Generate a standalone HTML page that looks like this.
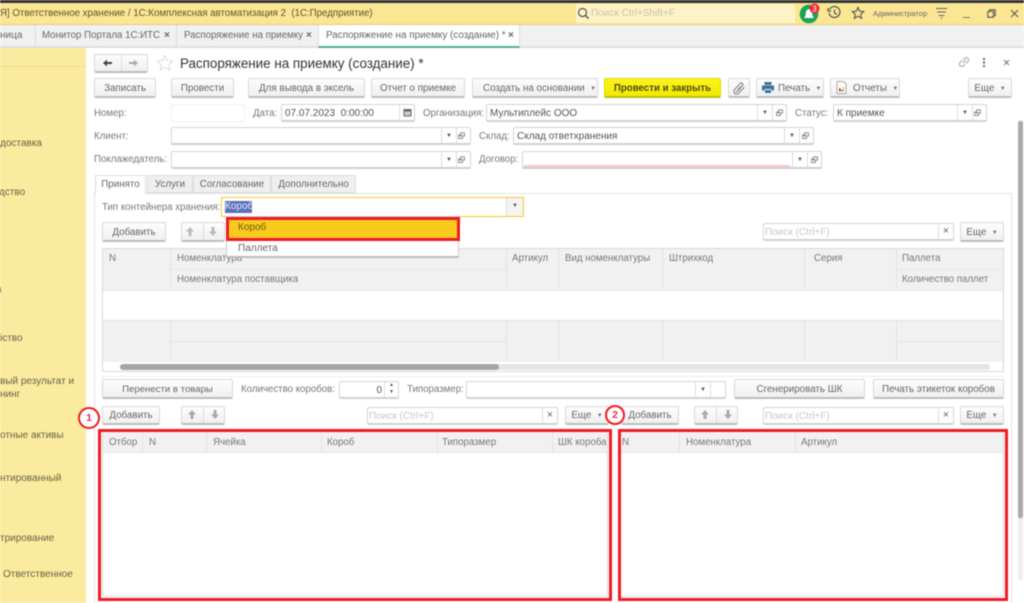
<!DOCTYPE html>
<html lang="ru"><head><meta charset="utf-8"><title>Распоряжение на приемку</title>
<style>
html,body{margin:0;padding:0;background:#fff}
#r{position:relative;width:1024px;height:603px;overflow:hidden;background:#fff;font:10px "Liberation Sans",sans-serif;color:#555;filter:blur(.5px)}
#r div,#r svg{position:absolute;box-sizing:border-box}
.t{white-space:nowrap;line-height:16px}
.b{background:linear-gradient(#fdfdfd,#f0f0f0);border:1px solid #d8d8d8;border-bottom:2px solid #bdbdbd;border-radius:2px;text-align:center;color:#666;white-space:nowrap;line-height:19px;font-size:9.8px}
.i{background:#fff;border:1px solid #d4d4d4;border-bottom:2px solid #d0d0d0;border-radius:2px;color:#555;line-height:17px;padding-left:3px;white-space:nowrap}
.s{border-left:1px solid #ddd;top:0;bottom:0;text-align:center;color:#555}
.l{color:#777;font-size:9.7px}
.h{background:#f1f1f1}
.c{top:0;bottom:0;border-left:1px solid #e2e2e2}
.rd{border:3px solid #ee1c25}
.ph{color:#c8c8c8}
.side{color:#6a6345}
.a{font-size:6px;vertical-align:1px;color:#777}
</style></head><body><div id="r">
<!-- top bars -->
<div style="left:0;top:0;width:1024px;height:3px;background:#333"></div>
<div style="left:0;top:3px;width:1024px;height:22px;background:#fbe694;border-bottom:1px solid #e5cf78"></div>
<div class="t" style="left:0;top:6px;font-size:9.7px;color:#5c5530">Я] Ответственное хранение / 1С:Комплексная автоматизация 2 &nbsp;(1С:Предприятие)</div>
<div style="left:576px;top:4px;width:219px;height:19px;background:#fdf3c6"></div>
<svg style="left:577px;top:7px" width="13" height="13" viewBox="0 0 13 13"><circle cx="5.5" cy="5.5" r="4" fill="none" stroke="#555" stroke-width="1.2"/><path d="M8.5 8.5L11.5 11.5" stroke="#555" stroke-width="1.4"/></svg>
<div class="t" style="left:591px;top:6px;color:#c9c4a8;font-size:10px">Поиск Ctrl+Shift+F</div>
<svg style="left:799px;top:2px" width="26" height="22" viewBox="0 0 26 22"><circle cx="10" cy="12" r="9.3" fill="#18a45a"/><path d="M5 16c2-2 1.500-4 2-6 .5-2 1.500-3 3-3s2.500 1 3 3c.5 2 0 4 2 6z" fill="#fff"/><circle cx="15.500" cy="6.500" r="5" fill="#ee2b33"/><text x="15.500" y="9.500" font-size="8" fill="#fff" text-anchor="middle" font-family="Liberation Sans">3</text></svg>
<svg style="left:827px;top:5px" width="15" height="15" viewBox="0 0 15 15"><path d="M2.500 4.500A5.500 5.500 0 1 1 2 8" fill="none" stroke="#555" stroke-width="1.200"/><path d="M1 3v3h3M7.500 4.500v3.500l2.500 1.500" fill="none" stroke="#555" stroke-width="1.200"/></svg>
<svg style="left:851px;top:6px" width="14" height="14" viewBox="0 0 14 14"><path d="M7 1.500l1.700 3.700 4 .4-3 2.700.9 4L7 10.300l-3.600 2 .9-4-3-2.700 4-.4z" fill="none" stroke="#555" stroke-width="1.100"/></svg>
<div class="t" style="left:873px;top:6px;font-size:7.5px;color:#666">Администратор</div>
<svg style="left:935px;top:7px" width="14" height="13" viewBox="0 0 14 13"><path d="M1 1.500h11M2 5h9M3.500 8.500h6" stroke="#666" stroke-width="1"/><path d="M5.500 10.500h2l-1 1.500z" fill="#555"/></svg>
<div style="left:963px;top:17px;width:7px;height:1px;background:#777"></div>
<svg style="left:987px;top:9px" width="9" height="9" viewBox="0 0 9 9"><path d="M2.500 2.500V.8h5.700v5.700H6.500M.8 2.500h5.700v5.700H.8z" fill="none" stroke="#555" stroke-width="1.100"/></svg>
<svg style="left:1010px;top:9px" width="9" height="9" viewBox="0 0 9 9"><path d="M1 1l7 7M8 1L1 8" stroke="#555" stroke-width="1"/></svg>
<!-- tab row -->
<div style="left:0;top:25px;width:1024px;height:23px;background:#f1f1f1;border-bottom:2px solid #dedede"></div>
<div class="t" style="left:0;top:28px;color:#666">ница</div>
<div style="left:35px;top:25px;width:1px;height:22px;background:#ddd"></div>
<div class="t" style="left:42px;top:28px;color:#666;font-size:9.7px">Монитор Портала 1С:ИТС</div>
<div class="t" style="left:164px;top:28px;color:#666;font-weight:bold">×</div>
<div style="left:176px;top:25px;width:1px;height:22px;background:#ddd"></div>
<div class="t" style="left:184px;top:28px;color:#666;font-size:9.7px">Распоряжение на приемку</div>
<div class="t" style="left:306px;top:28px;color:#666;font-weight:bold">×</div>
<div style="left:318px;top:25px;width:202px;height:23px;background:#fff;border-left:1px solid #ddd;border-right:1px solid #ddd;border-bottom:2px solid #4cb585"></div>
<div class="t" style="left:326px;top:28px;color:#666;font-size:9.9px">Распоряжение на приемку (создание) *</div>
<div class="t" style="left:508px;top:28px;color:#666;font-weight:bold">×</div>
<!-- sidebar -->
<div style="left:0;top:48px;width:86px;height:555px;background:#fbeb9e"></div>
<div style="left:0;top:66px;width:86px;height:1px;background:#efdc8d"></div>
<div class="t side" style="left:0;top:136px">доставка</div>
<div class="t side" style="left:-1px;top:185px">дство</div>
<div class="t side" style="left:-4px;top:282px">а</div>
<div class="t side" style="left:0;top:331px">іство</div>
<div class="t side" style="left:0;top:374px">вый результат и</div>
<div class="t side" style="left:0;top:387px">нинг</div>
<div class="t side" style="left:0;top:428px">отные активы</div>
<div class="t side" style="left:0;top:471px">нтированный</div>
<div class="t side" style="left:0;top:531px">трирование</div>
<div class="t side" style="left:3px;top:567px">Ответственное</div>
<!-- title -->
<div class="b" style="left:94px;top:54px;width:54px;height:19px"></div>
<div style="left:121px;top:55px;width:1px;height:16px;background:#ddd"></div>
<svg style="left:102px;top:58px" width="40" height="10" viewBox="0 0 40 10"><path d="M1 5l4-3.500V4h5v2H5v2.500z" fill="#444"/><path d="M36 5l-4-3.500V4h-5v2h5v2.500z" fill="#aaa"/></svg>
<svg style="left:156px;top:54px" width="18" height="18" viewBox="0 0 18 18"><path d="M9 1.500l2.300 5 5.400.6-4 3.700 1.100 5.400L9 13.500l-4.800 2.700 1.100-5.400-4-3.700 5.400-.6z" fill="none" stroke="#ddd" stroke-width="1"/></svg>
<div class="t" style="left:180px;top:56px;font-size:13.4px;line-height:16px;color:#333">Распоряжение на приемку (создание) *</div>
<svg style="left:957px;top:55px" width="14" height="14" viewBox="0 0 14 14"><path d="M6 8l3-3M5 5.500L3 7.500a2.300 2.300 0 0 0 3.300 3.300l1.500-1.500M9 8.500l2-2A2.300 2.300 0 0 0 7.700 3.200L6.200 4.700" fill="none" stroke="#aaa" stroke-width="1.100"/></svg>
<div style="left:983px;top:58px;width:2px;height:2px;background:#666;box-shadow:0 3.500px 0 #666,0 7px 0 #666"></div>
<svg style="left:1003px;top:59px" width="7" height="7" viewBox="0 0 7 7"><path d="M1 1l5 5M6 1L1 6" stroke="#777" stroke-width="1"/></svg>
<!-- command bar -->
<div class="b" style="left:94px;top:78px;width:62px;height:20px">Записать</div>
<div class="b" style="left:171px;top:78px;width:63px;height:20px">Провести</div>
<div class="b" style="left:248px;top:78px;width:117px;height:20px">Для вывода в эксель</div>
<div class="b" style="left:371px;top:78px;width:94px;height:20px">Отчет о приемке</div>
<div class="b" style="left:472px;top:78px;width:126px;height:20px;text-align:left;padding-left:10px">Создать на основании &nbsp;<span class="a">▼</span></div>
<div class="b" style="left:604px;top:78px;width:117px;height:20px;background:linear-gradient(#fcf41c,#f2ea00);border-color:#e0d800;border-bottom-color:#c2bb10;color:#4f4b10;font-weight:bold;font-size:9.7px">Провести и закрыть</div>
<div class="b" style="left:728px;top:78px;width:22px;height:20px"></div>
<svg style="left:732px;top:81px" width="14" height="14" viewBox="0 0 14 14"><path d="M4 11.500l6.500-7a1.600 1.600 0 0 0-2.300-2.200L2.500 8.700a2.700 2.700 0 0 0 3.800 3.800l6-6.300M6 8.500l3-3" fill="none" stroke="#777" stroke-width="1"/></svg>
<div class="b" style="left:756px;top:78px;width:68px;height:20px;text-align:left;padding-left:21px">Печать &nbsp;<span class="a">▼</span></div>
<svg style="left:761px;top:81px" width="14" height="13" viewBox="0 0 14 13"><path d="M3.500 1h7v3h-7zM1 4.500h12v5h-2.500V8h-7v1.500H1zM4 9h6v3H4z" fill="#3f6f99"/></svg>
<div class="b" style="left:830px;top:78px;width:70px;height:20px;text-align:left;padding-left:22px">Отчеты &nbsp;<span class="a">▼</span></div>
<svg style="left:836px;top:81px" width="11" height="13" viewBox="0 0 11 13"><path d="M1 .500h6.500L10 3v9.500H1z" fill="#fff" stroke="#aaa"/><path d="M3 7h1.500v3.500H3z" fill="#d33"/><path d="M5 8.500h1.500v2H5z" fill="#2a9a4a"/><path d="M7 6h1v4.500H7z" fill="#d9a520"/></svg>
<div class="b" style="left:968px;top:78px;width:44px;height:20px">Еще &nbsp;<span class="a">▼</span></div>
<!-- form rows -->
<div class="t l" style="left:94px;top:106px">Номер:</div>
<div class="i" style="left:171px;top:104px;width:74px;height:18px;border:1px solid #efefef"></div>
<div class="t l" style="left:253px;top:106px">Дата:</div>
<div class="i" style="left:281px;top:104px;width:134px;height:18px">07.07.2023 &nbsp;0:00:00<div class="s" style="left:117px;width:15px"></div></div>
<svg style="left:403px;top:108px" width="9" height="9" viewBox="0 0 9 9"><path d="M.5 1h8v7.500h-8z" fill="#666"/><path d="M1.500 3.500h6v4h-6z" fill="#ccc"/></svg>
<div class="t l" style="left:423px;top:106px">Организация:</div>
<div class="i" style="left:486px;top:104px;width:301px;height:18px">Мультиплейс ООО<div class="s" style="left:270px;width:15px;font-size:6px;line-height:16px">▼</div><div class="s" style="left:285px;width:14px"></div></div>
<div class="t l" style="left:795px;top:106px">Статус:</div>
<div class="i" style="left:833px;top:104px;width:154px;height:18px">К приемке<div class="s" style="left:123px;width:15px;font-size:6px;line-height:16px">▼</div><div class="s" style="left:138px;width:14px"></div></div>
<div class="t l" style="left:94px;top:129px">Клиент:</div>
<div class="i" style="left:171px;top:127px;width:300px;height:18px"><div class="s" style="left:269px;width:15px;font-size:6px;line-height:16px">▼</div><div class="s" style="left:284px;width:14px"></div></div>
<div class="t l" style="left:479px;top:129px">Склад:</div>
<div class="i" style="left:513px;top:127px;width:301px;height:18px">Склад ответхранения<div class="s" style="left:270px;width:15px;font-size:6px;line-height:16px">▼</div><div class="s" style="left:285px;width:14px"></div></div>
<div class="t l" style="left:94px;top:152px">Поклажедатель:</div>
<div class="i" style="left:171px;top:151px;width:300px;height:18px"><div class="s" style="left:269px;width:15px;font-size:6px;line-height:16px">▼</div><div class="s" style="left:284px;width:14px"></div></div>
<div class="t l" style="left:479px;top:152px">Договор:</div>
<div class="i" style="left:522px;top:151px;width:300px;height:18px"><div style="left:1px;top:13px;width:266px;height:2px;background:#f9c9c9"></div><div class="s" style="left:269px;width:15px;font-size:6px;line-height:16px">▼</div><div class="s" style="left:284px;width:14px"></div></div>
<svg style="left:0;top:0;width:1024px;height:603px" viewBox="0 0 1024 603"><g fill="none" stroke="#888" stroke-width=".9" transform="translate(2.5 2.5)"><path d="M775 110.500h5v-3h-4v2M777 109.500h-3v3.500h4v-2.500"/><path d="M973 110.500h5v-3h-4v2M975 109.500h-3v3.500h4v-2.500"/><path d="M457 133.500h5v-3h-4v2M459 132.500h-3v3.500h4v-2.500"/><path d="M801 133.500h5v-3h-4v2M803 132.500h-3v3.500h4v-2.500"/><path d="M457 157.500h5v-3h-4v2M459 156.500h-3v3.500h4v-2.500"/><path d="M810 157.500h5v-3h-4v2M812 156.500h-3v3.500h4v-2.500"/><path d="M713 386.500h5v-3h-4v2M715 385.500h-3v3.500h4v-2.500"/></g></svg>
<!-- form tabs -->
<div style="left:94px;top:193px;width:918px;height:410px;border:1px solid #e2e2e2;border-bottom:0"></div>
<div class="t" style="left:95px;top:175px;width:51px;height:19px;background:#fff;border:1px solid #ddd;border-bottom:0;text-align:center;line-height:17px;color:#666;font-size:9.8px">Принято</div>
<div class="t" style="left:147px;top:175px;width:46px;height:18px;background:#efefef;border:1px solid #ddd;text-align:center;line-height:17px;color:#666;font-size:9.8px">Услуги</div>
<div class="t" style="left:193px;top:175px;width:78px;height:18px;background:#efefef;border:1px solid #ddd;text-align:center;line-height:17px;color:#666;font-size:9.8px">Согласование</div>
<div class="t" style="left:271px;top:175px;width:85px;height:18px;background:#efefef;border:1px solid #ddd;text-align:center;line-height:17px;color:#666;font-size:9.8px">Дополнительно</div>
<!-- upper toolbar -->
<div class="t l" style="left:102px;top:200px">Тип контейнера хранения:</div>
<div style="left:221px;top:197px;width:303px;height:20px;border:1px solid #f9c82a"></div>
<div style="left:224.500px;top:201px;width:27px;height:12px;background:#5b6fbd"></div>
<div class="t" style="left:225px;top:199px;color:#e7e9f7">Короб</div>
<div class="s" style="left:506px;top:198px;bottom:auto;height:18px;width:17px;font-size:6px;line-height:17px;background:#f4f4f4">▼</div>
<div class="b" style="left:102px;top:222px;width:64px;height:20px">Добавить</div>
<div class="b" style="left:181px;top:222px;width:44px;height:20px"></div>
<div style="left:203px;top:223px;width:1px;height:17px;background:#ddd"></div>
<div class="i ph" style="left:763px;top:223px;width:191px;height:18px;padding-left:1px">Поиск (Ctrl+F)<div class="s" style="left:174px;width:15px;line-height:15px;color:#666;font-size:11px">×</div></div>
<div class="b" style="left:960px;top:222px;width:44px;height:20px">Еще &nbsp;<span class="a">▼</span></div>
<!-- upper table -->
<div style="left:102px;top:248px;width:902px;height:124px;border:1px solid #d8d8d8;background:#fff">
 <div class="h" style="left:0;top:0;right:0;height:41px"></div>
 <div class="h" style="left:0;top:71px;right:0;height:42px;border-top:1px solid #e2e2e2"></div>
 <div class="c" style="left:67px;height:113px;bottom:auto"></div>
 <div class="c" style="left:403px;height:113px;bottom:auto"></div>
 <div class="c" style="left:455px;height:113px;bottom:auto"></div>
 <div class="c" style="left:559px;height:113px;bottom:auto"></div>
 <div class="c" style="left:701px;height:113px;bottom:auto"></div>
 <div class="c" style="left:793px;height:113px;bottom:auto"></div>
 <div style="left:0;top:41px;right:0;height:30px;background:#fff;border-top:1px solid #e6e6e6"></div>
 <div style="left:67px;top:20px;width:336px;height:1px;background:#e6e6e6"></div>
 <div style="left:793px;top:20px;width:107px;height:1px;background:#e6e6e6"></div>
 <div style="left:67px;top:92px;width:336px;height:1px;background:#e2e2e2"></div>
 <div style="left:793px;top:92px;width:107px;height:1px;background:#e2e2e2"></div>
 <div class="t l" style="left:6px;top:2px">N</div>
 <div class="t l" style="left:74px;top:2px">Номенклатура</div>
 <div class="t l" style="left:74px;top:23px">Номенклатура поставщика</div>
 <div class="t l" style="left:409px;top:2px">Артикул</div>
 <div class="t l" style="left:462px;top:2px">Вид номенклатуры</div>
 <div class="t l" style="left:566px;top:2px">Штрихкод</div>
 <div class="t l" style="left:711px;top:2px">Серия</div>
 <div class="t l" style="left:799px;top:2px">Паллета</div>
 <div class="t l" style="left:799px;top:23px">Количество паллет</div>
 <div style="left:17px;top:115px;width:870px;height:6px;background:#e4e4e4;border-radius:3px"></div>
 <div style="left:17px;top:115px;width:379px;height:6px;background:#a6a6a6;border-radius:3px"></div>
</div>
<!-- upper arrows -->
<svg style="left:185px;top:226px" width="36" height="11" viewBox="0 0 36 11"><path d="M5 1l4 4.500H6.500V10h-3V5.500H1z" fill="#bbb"/><path d="M28 10l4-4.500h-2.500V1h-3v4.500H24z" fill="#bbb"/></svg>
<!-- dropdown -->
<div style="left:226px;top:216px;width:233px;height:42px;background:#fff;border:1px solid #ccc;border-bottom:2px solid #bbb"></div>
<div style="left:226px;top:217px;width:234px;height:24px;background:#f9cb1d;border:3px solid #ee1c25"></div>
<div class="t" style="left:238px;top:220px;color:#6d5a14">Короб</div>
<div class="t" style="left:238px;top:241px;color:#666">Паллета</div>
<!-- action row -->
<div style="left:102px;top:376px;width:902px;height:0;border-top:1px dotted #ddd"></div>
<div class="b" style="left:102px;top:379px;width:131px;height:20px;font-size:9.6px">Перенести в товары</div>
<div class="t l" style="left:241px;top:382px">Количество коробов:</div>
<div class="i" style="left:339px;top:381px;width:60px;height:18px;text-align:right;padding-right:16px">0<div class="s" style="left:44px;width:14px;font-size:5px;line-height:7px">▲<br>▼</div></div>
<div class="t l" style="left:407px;top:382px">Типоразмер:</div>
<div class="i" style="left:466px;top:381px;width:260px;height:18px"><div class="s" style="left:228px;width:15px;font-size:6px;line-height:16px">▼</div><div class="s" style="left:243px;width:15px"></div></div>
<div class="b" style="left:734px;top:379px;width:131px;height:20px">Сгенерировать ШК</div>
<div class="b" style="left:873px;top:379px;width:131px;height:20px">Печать этикеток коробов</div>
<!-- lower toolbars -->
<div class="b" style="left:102px;top:406px;width:58px;height:19px;line-height:18px">Добавить</div>
<div class="b" style="left:181px;top:406px;width:44px;height:19px"></div>
<div style="left:203px;top:407px;width:1px;height:16px;background:#ddd"></div>
<svg style="left:187px;top:409px" width="34" height="11" viewBox="0 0 34 11"><path d="M5 1l4 4.500H6.500V10h-3V5.500H1z" fill="#aaa"/><path d="M28 10l4-4.500h-2.500V1h-3v4.500H24z" fill="#aaa"/></svg>
<div class="i ph" style="left:367px;top:407px;width:191px;height:18px;padding-left:1px">Поиск (Ctrl+F)<div class="s" style="left:174px;width:15px;line-height:15px;color:#666;font-size:11px">×</div></div>
<div class="b" style="left:565px;top:406px;width:44px;height:19px;line-height:18px">Еще &nbsp;<span class="a">▼</span></div>
<div class="b" style="left:621px;top:406px;width:58px;height:19px;line-height:18px">Добавить</div>
<div class="b" style="left:694px;top:406px;width:44px;height:19px"></div>
<div style="left:716px;top:407px;width:1px;height:16px;background:#ddd"></div>
<svg style="left:700px;top:409px" width="34" height="11" viewBox="0 0 34 11"><path d="M5 1l4 4.500H6.500V10h-3V5.500H1z" fill="#aaa"/><path d="M28 10l4-4.500h-2.500V1h-3v4.500H24z" fill="#aaa"/></svg>
<div class="i ph" style="left:763px;top:407px;width:191px;height:18px;padding-left:1px">Поиск (Ctrl+F)<div class="s" style="left:174px;width:15px;line-height:15px;color:#666;font-size:11px">×</div></div>
<div class="b" style="left:960px;top:406px;width:44px;height:19px;line-height:18px">Еще &nbsp;<span class="a">▼</span></div>
<!-- lower tables -->
<div style="left:102px;top:431px;width:506px;height:166px;border:1px solid #d8d8d8;background:#fff"><div class="h" style="left:0;top:0;right:0;height:21px;border-bottom:1px solid #e4e4e4"></div>
 <div class="c" style="left:39px;height:21px;bottom:auto"></div><div class="c" style="left:103px;height:21px;bottom:auto"></div><div class="c" style="left:218px;height:21px;bottom:auto"></div><div class="c" style="left:334px;height:21px;bottom:auto"></div><div class="c" style="left:449px;height:21px;bottom:auto"></div>
 <div class="t l" style="left:6px;top:3px">Отбор</div><div class="t l" style="left:46px;top:3px">N</div><div class="t l" style="left:110px;top:3px">Ячейка</div><div class="t l" style="left:224px;top:3px">Короб</div><div class="t l" style="left:339px;top:3px">Типоразмер</div><div class="t l" style="left:455px;top:3px">ШК короба</div></div>
<div style="left:620px;top:431px;width:384px;height:166px;border:1px solid #d8d8d8;background:#fff"><div class="h" style="left:0;top:0;right:0;height:21px;border-bottom:1px solid #e4e4e4"></div>
 <div class="c" style="left:58px;height:21px;bottom:auto"></div><div class="c" style="left:174px;height:21px;bottom:auto"></div>
 <div class="t l" style="left:1px;top:3px">N</div><div class="t l" style="left:65px;top:3px">Номенклатура</div><div class="t l" style="left:180px;top:3px">Артикул</div></div>
<!-- annotations -->
<div class="rd" style="left:98px;top:429px;width:514px;height:172px"></div>
<div class="rd" style="left:618px;top:429px;width:390px;height:172px"></div>
<div style="left:78px;top:407px;width:22px;height:22px;border:2px solid #ee1c25;border-radius:50%;background:#fff;text-align:center;color:#ee2a4a;font-weight:bold;font-size:10.500px;line-height:19px">1</div>
<div style="left:605px;top:405px;width:20px;height:20px;border:2px solid #ee1c25;border-radius:50%;background:#fff;text-align:center;color:#ee2a4a;font-weight:bold;font-size:10.500px;line-height:17px">2</div>
<!-- main scrollbar -->
<div style="left:1018px;top:120px;width:5px;height:460px;background:#eee;border-radius:2px"></div>
<div style="left:1018px;top:121px;width:5px;height:397px;background:#aaa;border-radius:2px"></div>
</div></body></html>
